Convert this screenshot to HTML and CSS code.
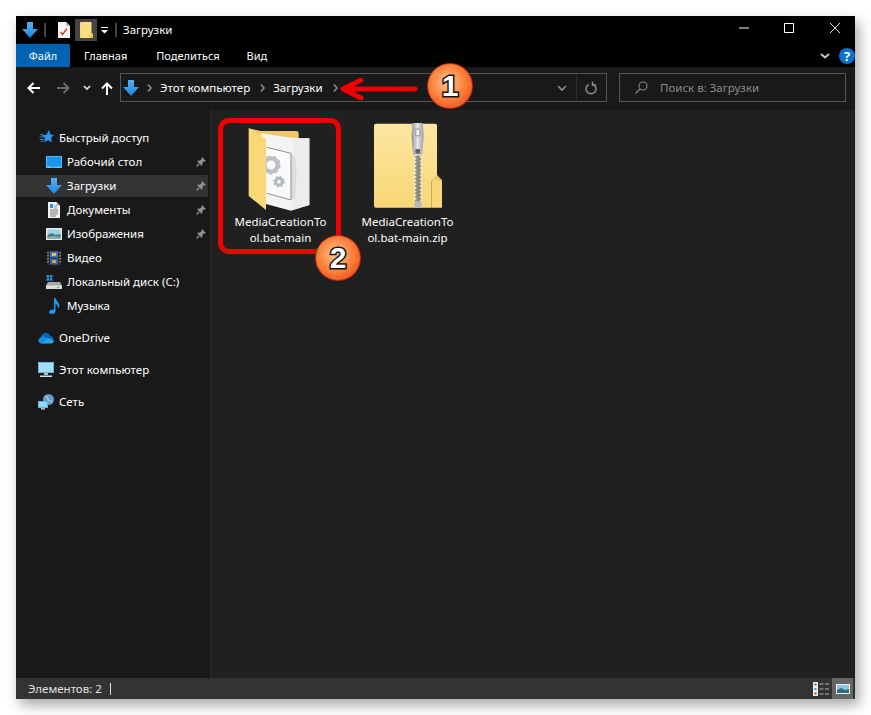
FILE: index.html
```html
<!DOCTYPE html>
<html lang="ru">
<head>
<meta charset="utf-8">
<title>Загрузки</title>
<link rel="stylesheet" href="styles.css">
</head>
<body>
<svg class="defs" width="0" height="0" aria-hidden="true">
  <defs>
    <linearGradient id="blueArrow" x1="0" y1="0" x2="0" y2="1"><stop offset="0" stop-color="#56b0f5"/><stop offset="1" stop-color="#1b86e0"/></linearGradient>
    <linearGradient id="zipFolder" x1="0" y1="0" x2="0" y2="1"><stop offset="0" stop-color="#fde6a2"/><stop offset="1" stop-color="#f8d775"/></linearGradient>
    <linearGradient id="zipMetal" x1="0" y1="0" x2="1" y2="0"><stop offset="0" stop-color="#8f9498"/><stop offset="0.5" stop-color="#e3e5e6"/><stop offset="1" stop-color="#9a9ea2"/></linearGradient>
    <symbol id="dl" viewBox="0 0 16 16"><path d="M5 0h6v7h5l-8 9-8-9h5z" fill="url(#blueArrow)"/></symbol>
    <symbol id="pin" viewBox="0 0 10 10"><path d="M6 0l4 4-1.200.6-.8-.4L6.200 6.500l.3 1.500-1 .8-4.300-4.300.8-1 1.500.3L5.800 2l-.4-.8z" fill="#8f8f8f"/><path d="M3.200 6.800L.5 9.500" stroke="#8f8f8f" stroke-width="1.200"/></symbol>
  </defs>
</svg>

<main class="window">
  <header class="titlebar">
    <svg class="ic-16" viewBox="0 0 16 16"><use href="#dl"/></svg>
    <span class="vsep"></span>
    <svg class="qa-doc" viewBox="0 0 12 16"><path d="M0 0h8l4 4v12H0z" fill="#f4f4f4"/><path d="M8 0l4 4H8z" fill="#b9b9b9"/><path d="M2.500 10l2 2.500L9 6.500" fill="none" stroke="#e23a2e" stroke-width="1.400"/></svg>
    <span class="qa-active"><svg class="qa-folder" viewBox="0 0 13 16"><path d="M0 1q0-1 1-1h9.500q1 0 1 1v10l1.500 1v4H1q-1 0-1-1z" fill="#fbdc83"/><path d="M11.500 11l-2 2v3H13v-4z" fill="#edc25e"/></svg></span>
    <svg class="qa-drop" viewBox="0 0 7 7"><path d="M0 0h7v1H0zM0 3h7L3.500 6.500z" fill="#fff"/></svg>
    <span class="vsep vsep-b"></span>
    <span class="title-text">Загрузки</span>
    <div class="win-controls">
      <svg class="wc wc-min" viewBox="0 0 10 10"><path d="M0 5h10" stroke="#fff"/></svg>
      <svg class="wc wc-max" viewBox="0 0 10 10"><path d="M.5.500h9v9h-9z" fill="none" stroke="#fff"/></svg>
      <svg class="wc wc-close" viewBox="0 0 10 10"><path d="M0 0l10 10M10 0L0 10" stroke="#fff" stroke-width=".9"/></svg>
    </div>
  </header>

  <nav class="tabs">
    <span class="tab tab-file">Файл</span>
    <span class="tab tab-home">Главная</span>
    <span class="tab tab-share">Поделиться</span>
    <span class="tab tab-view">Вид</span>
    <svg class="ribbon-chev" viewBox="0 0 10 6"><path d="M1 1l4 3.500L9 1" fill="none" stroke="#c8c8c8" stroke-width="2"/></svg>
    <span class="help">?</span>
  </nav>

  <section class="navbar">
    <svg class="nav-btn nav-back" viewBox="0 0 13 12"><path d="M13 6H1.500M6.500 1L1.500 6l5 5" fill="none" stroke="#fff" stroke-width="2"/></svg>
    <svg class="nav-btn nav-fwd" viewBox="0 0 13 12"><path d="M0 6h11.500M6.500 1l5 5-5 5" fill="none" stroke="#6b6b6b" stroke-width="2"/></svg>
    <svg class="nav-chev" viewBox="0 0 8 6"><path d="M1 1l3 3 3-3" fill="none" stroke="#e0e0e0" stroke-width="1.700"/></svg>
    <svg class="nav-up" viewBox="0 0 12 13"><path d="M6 13V1.500M1 6.500l5-5 5 5" fill="none" stroke="#fff" stroke-width="2"/></svg>
    <div class="address">
      <svg class="ic-16" viewBox="0 0 16 16"><use href="#dl"/></svg>
      <svg class="crumb-sep crumb-first" viewBox="0 0 5 8"><path d="M1 .5L4 4 1 7.500" fill="none" stroke="#8a8a8a" stroke-width="1.600"/></svg>
      <span class="crumb">Этот компьютер</span>
      <svg class="crumb-sep" viewBox="0 0 5 8"><path d="M1 .5L4 4 1 7.500" fill="none" stroke="#8a8a8a" stroke-width="1.600"/></svg>
      <span class="crumb">Загрузки</span>
      <svg class="crumb-sep" viewBox="0 0 5 8"><path d="M1 .5L4 4 1 7.500" fill="none" stroke="#8a8a8a" stroke-width="1.600"/></svg>
      <svg class="addr-chev" viewBox="0 0 10 6"><path d="M1 1l4 4 4-4" fill="none" stroke="#8a8a8a" stroke-width="1.700"/></svg>
      <span class="addr-div"></span>
      <svg class="addr-refresh" viewBox="0 0 12 14"><path d="M3.500 3.500a5 5 0 1 0 5 0" fill="none" stroke="#8a8a8a" stroke-width="1.500"/><path d="M7.500.5v3.500H11" fill="none" stroke="#8a8a8a" stroke-width="1.500"/></svg>
    </div>
    <div class="search">
      <svg class="search-ic" viewBox="0 0 13 13"><circle cx="8" cy="5" r="4" fill="none" stroke="#8a8a8a" stroke-width="1.100"/><path d="M5 8l-4.500 4.500" stroke="#8a8a8a" stroke-width="1.100"/></svg>
      <span class="search-text">Поиск в: Загрузки</span>
    </div>
  </section>

  <section class="body">
    <aside class="sidebar">
      <div class="group">
        <div class="row row-head"><svg class="ic-16" viewBox="0 0 16 16"><path d="M11 0l1.500 4.600 3.500.4-2.900 2.800.9 4.700L10 10l-4 2.500 1.100-4.600L3.500 5.200l4.900-.4z" fill="#2b97f0"/><path d="M2 4.500h3M1.500 7h4M2 9.500h3.500M3 12l2.500-1.500" stroke="#2b97f0" stroke-width=".9"/></svg><span>Быстрый доступ</span></div>
        <div class="row row-sub"><svg class="ic-16" viewBox="0 0 16 16"><path d="M0 2h16v12H0z" fill="#55b7f7"/><path d="M1 3h14v9.500H1z" fill="#1a96f0"/><path d="M2 13h1v.6H2zM11 13h1v.6h-1zM13 13h1v.6h-1z" fill="#fff"/></svg><span class="label">Рабочий стол</span><svg class="pin" viewBox="0 0 10 10"><use href="#pin"/></svg></div>
        <div class="row row-sub row-selected"><svg class="ic-16" viewBox="0 0 16 16"><use href="#dl"/></svg><span class="label">Загрузки</span><svg class="pin" viewBox="0 0 10 10"><use href="#pin"/></svg></div>
        <div class="row row-sub"><svg class="ic-16" viewBox="0 0 16 16"><path d="M2 0h8.500L14 3.500V16H2z" fill="#f3f3f3"/><path d="M10.500 0L14 3.500h-3.500z" fill="#a8a8a8"/><path d="M4 8h8M4 10h8M4 12h8M4 14h6" stroke="#555" stroke-width=".8"/><path d="M4 2h3v4H4z" fill="#2c8fe0"/><path d="M8 4h3M8 6h3" stroke="#2c8fe0" stroke-width=".8"/></svg><span class="label">Документы</span><svg class="pin" viewBox="0 0 10 10"><use href="#pin"/></svg></div>
        <div class="row row-sub"><svg class="ic-16" viewBox="0 0 16 16"><path d="M0 2h16v12H0z" fill="#e9e9e9"/><path d="M1.500 3.500h13v9h-13z" fill="#9fd0ea"/><path d="M1.500 9l4-2 4 2 5-1v4.500h-13z" fill="#3c7f80"/><path d="M1.500 11l6-1 7 1v1.500h-13z" fill="#8ab0a8"/></svg><span class="label">Изображения</span><svg class="pin" viewBox="0 0 10 10"><use href="#pin"/></svg></div>
        <div class="row row-sub"><svg class="ic-16" viewBox="0 0 16 16"><path d="M1 .5h14v15H1z" fill="#2a2a2a"/><path d="M4 1.500h8v6H4z" fill="#3f78b8"/><path d="M4 8.500h8v6H4z" fill="#2d65a8"/><path d="M6 3h4v3H6z" fill="#e8c04f"/><path d="M6 10h4v3H6z" fill="#d8a040"/><path d="M2 2v1.500M2 5v1.500M2 8v1.500M2 11v1.500M14 2v1.500M14 5v1.500M14 8v1.500M14 11v1.500" stroke="#ccc" stroke-width="1"/></svg><span class="label">Видео</span></div>
        <div class="row row-sub"><svg class="ic-16" viewBox="0 0 16 16"><path d="M.5 1h2.500v2.500H.5zM3.800 1h2.500v2.500H3.800zM.5 4.300h2.500v2.500H.5zM3.800 4.300h2.500v2.500H3.800z" fill="#1c9cf0"/><path d="M2 8h12l2 3.500V15H0v-3.500z" fill="#a9a9a9"/><path d="M0 11.500h16V15H0z" fill="#dcdcdc"/><path d="M11 13h2v1h-2z" fill="#3fcf50"/></svg><span class="label">Локальный диск (C:)</span></div>
        <div class="row row-sub"><svg class="ic-16" viewBox="0 0 16 16"><path d="M8 0h1.500c.3 3 3.800 4 3.800 7.500 0 1.500-.6 2.500-1.300 3 .3-2.500-1-4-2.500-4.700V13c0 2-2 3-4 3-1.500 0-2.500-.7-2.500-1.900C3 12.500 5 11 8 11.500z" fill="#1e9bf0"/></svg><span class="label">Музыка</span></div>
      </div>
      <div class="group">
        <div class="row row-head"><svg class="ic-16" viewBox="0 0 16 16"><path d="M3.500 13.500a3.300 3.300 0 0 1-.6-6.500 5 5 0 0 1 9.500-1 3.800 3.800 0 0 1 3.100 3.700v.3L8 13.500z" fill="#0c63b5"/><path d="M3.500 13.500L10.500 8l5.300 2.500a3 3 0 0 1-2.800 3z" fill="#28a8ea"/><path d="M3 7a3.300 3.300 0 0 1 4.500.5L10.500 8 3.500 13.500a3.300 3.300 0 0 1-3-3z" fill="#1490df"/></svg><span>OneDrive</span></div>
      </div>
      <div class="group">
        <div class="row row-head"><svg class="ic-16" viewBox="0 0 16 16"><path d="M0 0h16v11H0z" fill="#62b9ee"/><path d="M1 1h14v9H1z" fill="#a6dcf8"/><path d="M6 11h4v2H6z" fill="#bbb"/><path d="M2 13.500h12V15H2z" fill="#ddd"/></svg><span>Этот компьютер</span></div>
      </div>
      <div class="group">
        <div class="row row-head"><svg class="ic-16" viewBox="0 0 16 16"><circle cx="10.500" cy="5.500" r="5.500" fill="#6a9cc8"/><path d="M7 2q3 1 3 3t3 2l1 1" fill="none" stroke="#c6dcec"/><path d="M0 7h10v7H0z" fill="#59b3ea"/><path d="M1 8h8v5H1z" fill="#9bd6f6"/><path d="M3 14.200h4v1.300H3z" fill="#ddd"/></svg><span>Сеть</span></div>
      </div>
    </aside>
    <div class="files">
      <article class="file">
        <div class="file-icon">
          <svg class="ico-folder" viewBox="111 51 189 255">
            <path d="M113 55l36 8h107q7 0 7 7v195H165z" fill="#f0c86a"/>
            <path d="M150 70l95 14 50 1v200l-55 17-75-20z" fill="#f4f4f4"/>
            <path d="M245 88l50-3v200l-50 14z" fill="#ececec"/>
            <path d="M240 130l12 10q8 40 0 125l-12 5z" fill="#dcdcdc"/>
            <path d="M168 112l72 18v140l-72-20z" fill="#fafafa"/>
            <path d="M168 112l72 18v140l-72-20" fill="none" stroke="#909090" stroke-width="3"/>
            <circle cx="180" cy="165" r="20" fill="none" stroke="#bcc1c7" stroke-width="13"/>
            <circle cx="180" cy="165" r="24" fill="none" stroke="#bcc1c7" stroke-width="10" stroke-dasharray="8 9"/>
            <circle cx="204" cy="215" r="10" fill="none" stroke="#b4b9c0" stroke-width="9"/>
            <circle cx="204" cy="215" r="14" fill="none" stroke="#b4b9c0" stroke-width="7" stroke-dasharray="5 6"/>
            <path d="M113 55l52 31v214l-52-42z" fill="#f8d878"/>
          </svg>
        </div>
        <div class="file-name">MediaCreationTo<br>ol.bat-main</div>
      </article>
      <article class="file">
        <div class="file-icon">
          <svg class="ico-zip" viewBox="490 40 205 255">
            <path d="M496 42h178q6 0 6 6v150l-17 17v80H496q-6 0-6-6V48q0-6 6-6z" fill="url(#zipFolder)"/>
            <path d="M663 215l17-18 15 15v83h-32z" fill="#f8d778"/>
            <path d="M680 197l15 15-6 3-9-8-13 10z" fill="#e8c160"/>
            <path d="M614 135h18v160h-18z" fill="#8b8b80"/>
            <path d="M614 135h18v160h-18z" fill="none" stroke="#e7e2c8" stroke-width="7" stroke-dasharray="6 5"/>
            <path d="M606 42q2-5 8-5h15q6 0 8 5l3 38-5 55h-27l-5-55z" fill="url(#zipMetal)"/>
            <path d="M616 58h12v20h-12z" fill="#f1f1f1" stroke="#777" stroke-width="2"/>
            <path d="M615 118h14v14h-14z" fill="#5f6266"/>
            <path d="M612 275h22v20h-22z" fill="#b8b8b0"/>
          </svg>
        </div>
        <div class="file-name">MediaCreationTo<br>ol.bat-main.zip</div>
      </article>
    </div>
  </section>

  <footer class="status">
    <span>Элементов: 2</span>
    <span class="status-sep"></span>
    <svg class="view-details" viewBox="0 0 17 14"><path d="M0 0h5v14H0z" fill="#eee"/><path d="M1.500 1.500h2v2h-2z" fill="#666"/><path d="M1.500 6h2v2h-2z" fill="#3a8fe0"/><path d="M1.500 10.500h2v2h-2z" fill="#d8342a"/><path d="M6.500 2h4M12 2h4M6.500 7h4M12 7h4M6.500 12h4M12 12h4" stroke="#8a8a8a" stroke-width="1.300"/></svg>
    <span class="view-tiles"><svg class="view-tiles-ic" viewBox="0 0 14 10"><path d="M0 0h14v10H0z" fill="#eee"/><path d="M1 1h12v8H1z" fill="#8dc6e6"/><path d="M1 6l4-2 4 2 4-1v4H1z" fill="#2e7078"/></svg></span>
  </footer>

  <div class="callout-box"></div>
  <svg class="callout-arrow" viewBox="0 0 80 22"><path d="M76 11H6M22 2L4 11l18 9" fill="none" stroke="#f00000" stroke-width="5" stroke-linecap="round" stroke-linejoin="round"/></svg>
  <span class="badge badge-1">1</span>
  <span class="badge badge-2">2</span>
</main>
</body>
</html>
```

FILE: styles.css
```css
* { box-sizing: border-box; }
html, body { margin: 0; padding: 0; height: 100%; background: #fff; }
body { padding: 16px; font: 11.5px/16px "Noto Sans", "Open Sans", sans-serif; color: #fff; overflow: hidden; }
svg { display: block; flex: none; }
.defs { position: absolute; }

.window { position: relative; width: 839px; height: 683px; display: flex; flex-direction: column; background: #191919; box-shadow: 4px 6px 12px rgba(0,0,0,.35); }

.titlebar { height: 28px; background: #000; display: flex; align-items: center; padding-left: 6px; flex: none; }
.ic-16 { width: 16px; height: 16px; }
.vsep { width: 2px; height: 14px; margin-left: 6px; background: #444; }
.qa-doc { width: 12px; height: 16px; margin-left: 12px; }
.qa-active { width: 22px; height: 22px; margin-left: 5px; background: #444; display: flex; align-items: center; justify-content: center; }
.qa-folder { width: 13px; height: 16px; }
.qa-drop { width: 7px; height: 7px; margin-left: 4px; }
.vsep-b { margin-left: 7px; }
.title-text { margin-left: 6px; }
.win-controls { margin-left: auto; margin-bottom: 4px; display: flex; align-items: center; }
.wc { width: 10px; height: 10px; }
.wc-min { margin-right: 35px; }
.wc-max { margin-right: 36px; }
.wc-close { margin-right: 15px; }

.tabs { height: 23px; background: #000; display: flex; align-items: center; flex: none; }
.tab { height: 23px; line-height: 23px; font-size: 11px; }
.tab-file { width: 54px; background: #0063b1; text-align: center; }
.tab-home { margin-left: 14px; }
.tab-share { margin-left: 29px; }
.tab-view { margin-left: 27px; }
.ribbon-chev { width: 10px; height: 6px; margin-left: auto; margin-right: 9px; }
.help { width: 16px; height: 16px; border-radius: 50%; background: #0a6fd0; color: #fff; font-weight: 700; font-size: 13px; line-height: 16px; text-align: center; }

.navbar { height: 43px; padding-top: 6px; display: flex; align-items: flex-start; flex: none; }
.nav-btn { width: 13px; height: 12px; margin-top: 9px; }
.nav-back { margin-left: 11px; }
.nav-fwd { margin-left: 17px; }
.nav-chev { width: 8px; height: 6px; margin: 12px 0 0 13px; }
.nav-up { width: 12px; height: 13px; margin: 9px 0 0 10px; }
.address { width: 487px; height: 29px; margin-left: 7px; border: 1px solid #555; display: flex; align-items: center; padding-left: 2px; }
.crumb-sep { width: 5px; height: 8px; margin-left: 10px; }
.crumb-first { margin-left: 8px; }
.crumb { margin-left: 8px; }
.addr-chev { width: 10px; height: 6px; margin-left: auto; }
.addr-div { width: 1px; height: 27px; background: #2c2c2c; margin-left: 9px; }
.addr-refresh { width: 12px; height: 14px; margin: 0 9px 0 8px; }
.search { width: 227px; height: 29px; margin-left: 12px; border: 1px solid #555; display: flex; align-items: center; padding-left: 15px; }
.search-ic { width: 13px; height: 13px; }
.search-text { margin-left: 12px; color: #8a8a8a; }

.body { flex: 1; display: flex; min-height: 0; }
.sidebar { width: 196px; padding-top: 17px; border-right: 2px solid #262626; display: flex; flex-direction: column; gap: 10px; flex: none; }
.group { display: flex; flex-direction: column; gap: 2px; width: 192px; }
.row { height: 22px; display: flex; align-items: center; gap: 5px; }
.row-head { padding-left: 22px; }
.row-sub { padding-left: 30px; padding-right: 2px; }
.row-selected { background: #333; }
.label { flex: 1; }
.pin { width: 10px; height: 10px; }

.files { flex: 1; padding: 13px 0 0 5px; display: flex; align-items: flex-start; background: #202020; }
.file { width: 127px; display: flex; flex-direction: column; align-items: center; }
.file-icon { height: 90px; }
.ico-folder { width: 63px; height: 85px; margin: 4px 3px 0 0; }
.ico-zip { width: 68px; height: 85px; }
.file-name { margin-top: 1px; text-align: center; white-space: nowrap; }

.status { height: 21px; background: #333; display: flex; align-items: center; padding-left: 12px; flex: none; color: #e0e0e0; }
.status-sep { width: 1px; height: 12px; background: #ddd; margin-left: 8px; }
.view-details { width: 17px; height: 14px; margin-left: auto; }
.view-tiles { width: 21px; height: 21px; margin: 0 2px; background: #666; display: flex; align-items: center; justify-content: center; }
.view-tiles-ic { width: 14px; height: 10px; }

.callout-box { position: absolute; left: 202px; top: 102px; width: 123px; height: 136px; border: 5px solid #f00000; border-radius: 11px; }
.callout-arrow { position: absolute; left: 323px; top: 62px; width: 80px; height: 22px; }
.badge { position: absolute; width: 46px; height: 46px; border-radius: 50%; background: radial-gradient(circle at 45% 42%, #ffc590 0, #fb7f38 50%, #e8351a 100%); border: 1px solid #b8280c; color: #fff; font: 700 30px/44px "Liberation Sans", sans-serif; text-align: center; -webkit-text-stroke: 3px #111; paint-order: stroke fill; }
.badge-1 { left: 411px; top: 47px; }
.badge-2 { left: 299px; top: 219px; }
```
